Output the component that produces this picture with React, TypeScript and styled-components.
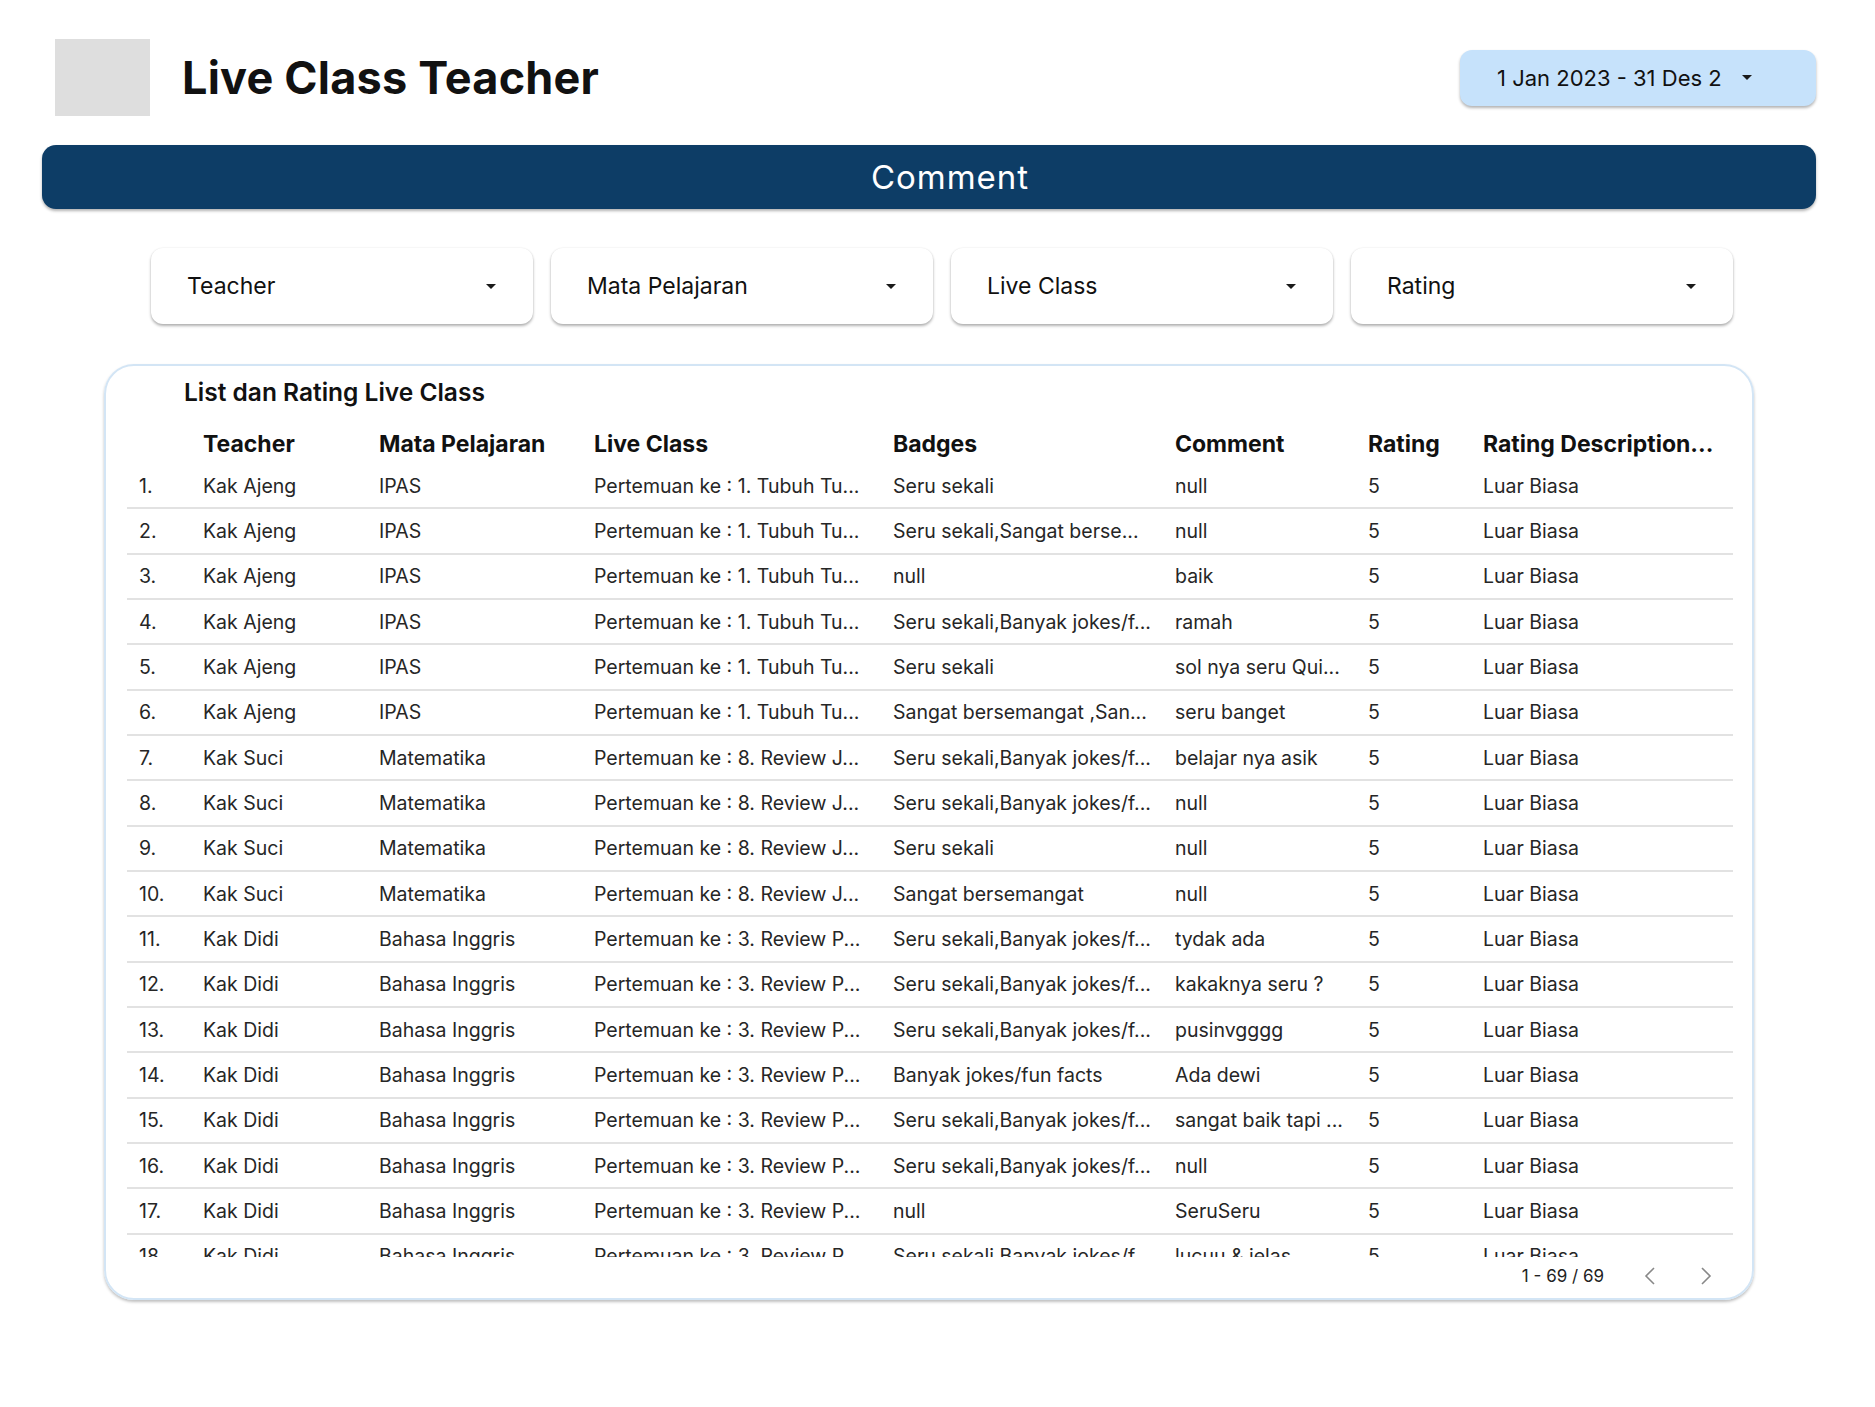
import styled, { createGlobalStyle } from 'styled-components';

const GlobalStyle = createGlobalStyle`
  body {
    margin: 0;
    background: #fff;
    font-family: Inter, 'Noto Sans', sans-serif;
    color: #111;
  }
`;

const Page = styled.div`
  width: 1875px;
  box-sizing: border-box;
  padding: 39px 59px 40px 42px;
`;

const Header = styled.header`
  display: flex;
  align-items: center;
  justify-content: space-between;
`;

const Brand = styled.div`
  display: flex;
  align-items: center;
  gap: 32px;
  padding-left: 13px;
`;

const Logo = styled.div`
  width: 95px;
  height: 77px;
  background: #dedede;
`;

const Title = styled.h1`
  margin: 0;
  font-size: 45px;
  font-weight: 700;
  letter-spacing: 0.2px;
`;

const DateButton = styled.button`
  width: 356px;
  height: 56px;
  display: flex;
  align-items: center;
  justify-content: space-between;
  padding: 0 64px 0 37px;
  border: none;
  border-radius: 12px;
  background: #c6e2fb;
  box-shadow: 0 2px 3px rgba(0, 0, 0, 0.3);
  font-family: inherit;
  font-size: 22px;
  color: #111;
  white-space: nowrap;
`;

const CommentBar = styled.div`
  margin-top: 29px;
  height: 64px;
  display: flex;
  align-items: center;
  justify-content: center;
  padding-left: 42px;
  border-radius: 14px;
  background: #0d3d66;
  box-shadow: 0 2px 3px rgba(0, 0, 0, 0.3);
  color: #fff;
  font-size: 33px;
  font-weight: 400;
  letter-spacing: 1px;
`;

const FilterRow = styled.div`
  margin-top: 39px;
  padding-left: 109px;
  display: flex;
  gap: 18.5px;
`;

const FilterCard = styled.div`
  width: 381.5px;
  height: 76px;
  box-sizing: border-box;
  display: flex;
  align-items: center;
  justify-content: space-between;
  padding: 0 37px 0 36px;
  border-radius: 12px;
  background: #fff;
  box-shadow: 0 2px 3px rgba(0, 0, 0, 0.3), 0 0 2px rgba(0, 0, 0, 0.08);
  font-size: 23px;
  color: #111;
`;

const TableCard = styled.section`
  margin: 40px 62px 0;
  box-sizing: border-box;
  height: 936px;
  padding: 12px 19px 0 21px;
  border: 2px solid #d3e5f5;
  border-radius: 30px;
  box-shadow: 0 2px 3px rgba(0, 0, 0, 0.25);
  display: flex;
  flex-direction: column;
`;

const CardTitle = styled.h2`
  margin: 0 0 18px 57px;
  font-size: 24.5px;
  line-height: 28px;
  font-weight: 600;
`;

const columns = '76px 176px 215px 299px 282px 193px 115px 250px';

const HeadRow = styled.div`
  display: grid;
  grid-template-columns: ${columns};
  height: 40px;
  align-items: center;
`;

const HeadCell = styled.div`
  font-size: 23px;
  font-weight: 700;
  white-space: nowrap;
  overflow: hidden;
  padding-right: 8px;
`;

const Body = styled.div`
  height: 793px;
  overflow: hidden;
`;

const Row = styled.div`
  display: grid;
  grid-template-columns: ${columns};
  height: 45.34px;
  box-sizing: border-box;
  align-items: center;
  border-bottom: 2px solid #e2e2e2;
`;

const Cell = styled.div<{ $index?: boolean }>`
  font-size: 19.5px;
  color: #262626;
  white-space: nowrap;
  overflow: hidden;
  padding-left: ${({ $index }) => ($index ? '12px' : '0')};
  padding-right: 8px;
`;

const Pager = styled.div`
  height: 38px;
  display: flex;
  align-items: center;
  justify-content: flex-end;
  gap: 24px;
  padding-right: 11px;
  font-size: 17px;
  color: #222;
`;

const PagerLabel = styled.span`
  margin-right: 6px;
`;

const PagerButton = styled.span`
  display: flex;
  align-items: center;
  justify-content: center;
  width: 32px;
  height: 32px;
`;

const Caret = () => (
  <svg width="10" height="5" viewBox="0 0 10 5">
    <path d="M0 0h10L5 5z" fill="#1a1a1a" />
  </svg>
);

const Chevron = ({ dir }: { dir: 'left' | 'right' }) => (
  <svg width="12" height="20" viewBox="0 0 12 20">
    <path
      d={dir === 'left' ? 'M10 2L2 10l8 8' : 'M2 2l8 8-8 8'}
      fill="none"
      stroke="#888"
      strokeWidth="1.6"
    />
  </svg>
);

const filters = ['Teacher', 'Mata Pelajaran', 'Live Class', 'Rating'];

const headers = [
  '',
  'Teacher',
  'Mata Pelajaran',
  'Live Class',
  'Badges',
  'Comment',
  'Rating',
  'Rating Description...',
];

const lcIpas = 'Pertemuan ke : 1. Tubuh Tu...';
const lcMtk = 'Pertemuan ke : 8. Review J...';
const lcBing = 'Pertemuan ke : 3. Review P...';
const jokes = 'Seru sekali,Banyak jokes/f...';

const rows: [string, string, string, string, string][] = [
  ['Kak Ajeng', 'IPAS', lcIpas, 'Seru sekali', 'null'],
  ['Kak Ajeng', 'IPAS', lcIpas, 'Seru sekali,Sangat berse...', 'null'],
  ['Kak Ajeng', 'IPAS', lcIpas, 'null', 'baik'],
  ['Kak Ajeng', 'IPAS', lcIpas, jokes, 'ramah'],
  ['Kak Ajeng', 'IPAS', lcIpas, 'Seru sekali', 'sol nya seru Qui...'],
  ['Kak Ajeng', 'IPAS', lcIpas, 'Sangat bersemangat ,San...', 'seru banget'],
  ['Kak Suci', 'Matematika', lcMtk, jokes, 'belajar nya asik'],
  ['Kak Suci', 'Matematika', lcMtk, jokes, 'null'],
  ['Kak Suci', 'Matematika', lcMtk, 'Seru sekali', 'null'],
  ['Kak Suci', 'Matematika', lcMtk, 'Sangat bersemangat', 'null'],
  ['Kak Didi', 'Bahasa Inggris', lcBing, jokes, 'tydak ada'],
  ['Kak Didi', 'Bahasa Inggris', lcBing, jokes, 'kakaknya seru ?'],
  ['Kak Didi', 'Bahasa Inggris', lcBing, jokes, 'pusinvgggg'],
  ['Kak Didi', 'Bahasa Inggris', lcBing, 'Banyak jokes/fun facts', 'Ada dewi'],
  ['Kak Didi', 'Bahasa Inggris', lcBing, jokes, 'sangat baik tapi ...'],
  ['Kak Didi', 'Bahasa Inggris', lcBing, jokes, 'null'],
  ['Kak Didi', 'Bahasa Inggris', lcBing, 'null', 'SeruSeru'],
  ['Kak Didi', 'Bahasa Inggris', lcBing, jokes, 'lucuu & jelas'],
];

export default function App() {
  return (
    <>
      <GlobalStyle />
      <Page>
        <Header>
          <Brand>
            <Logo />
            <Title>Live Class Teacher</Title>
          </Brand>
          <DateButton>
            1 Jan 2023 - 31 Des 2
            <Caret />
          </DateButton>
        </Header>

        <CommentBar>Comment</CommentBar>

        <FilterRow>
          {filters.map((f) => (
            <FilterCard key={f}>
              {f}
              <Caret />
            </FilterCard>
          ))}
        </FilterRow>

        <TableCard>
          <CardTitle>List dan Rating Live Class</CardTitle>
          <HeadRow>
            {headers.map((h, i) => (
              <HeadCell key={i}>{h}</HeadCell>
            ))}
          </HeadRow>
          <Body>
            {rows.map((r, i) => (
              <Row key={i}>
                <Cell $index>{i + 1}.</Cell>
                {r.map((v, j) => (
                  <Cell key={j}>{v}</Cell>
                ))}
                <Cell>5</Cell>
                <Cell>Luar Biasa</Cell>
              </Row>
            ))}
          </Body>
          <Pager>
            <PagerLabel>1 - 69 / 69</PagerLabel>
            <PagerButton>
              <Chevron dir="left" />
            </PagerButton>
            <PagerButton>
              <Chevron dir="right" />
            </PagerButton>
          </Pager>
        </TableCard>
      </Page>
    </>
  );
}
